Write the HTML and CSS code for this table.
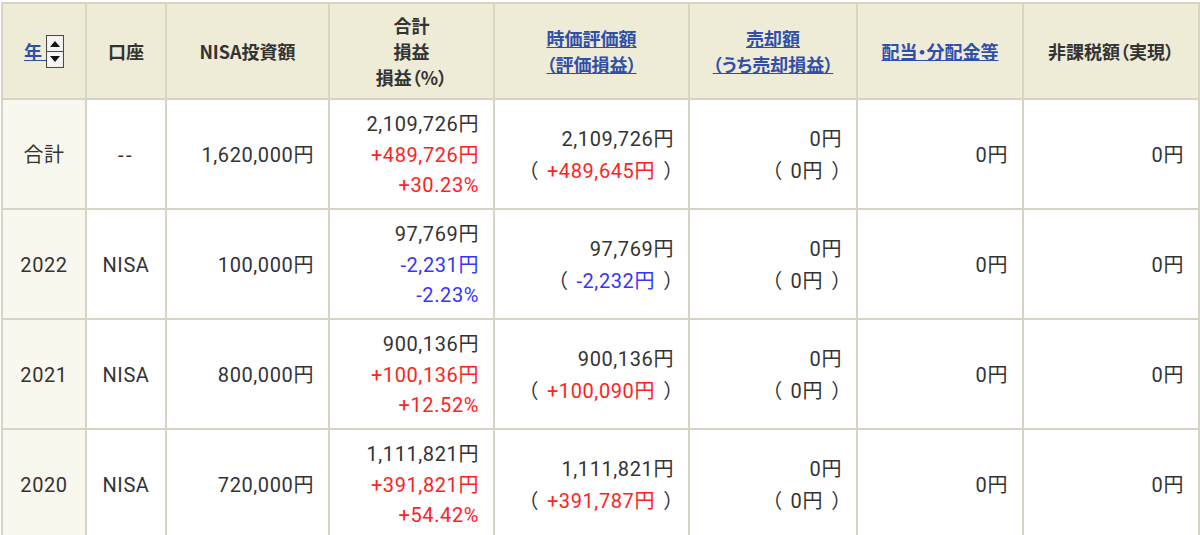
FILE: index.html
```html
<!DOCTYPE html>
<html lang="ja">
<head>
<meta charset="utf-8">
<title>NISA</title>
<link rel="stylesheet" href="styles.css">
</head>
<body>
<table class="tbl">
  <colgroup>
    <col class="c1"><col class="c2"><col class="c3"><col class="c4"><col class="c5"><col class="c6"><col class="c7"><col class="c8">
  </colgroup>
  <thead>
    <tr class="hrow">
      <th><span class="year"><a href="#" class="lnk">年&nbsp;</a><svg class="sort" width="18" height="33" viewBox="0 0 18 33"><rect x="0.5" y="0.5" width="17" height="32" fill="#e8e8e8" stroke="#4a4a4a"/><rect x="1.5" y="1.5" width="15" height="14" fill="#f4f4f4"/><rect x="1.5" y="17.5" width="15" height="14" fill="#f4f4f4"/><line x1="0" y1="16.5" x2="18" y2="16.5" stroke="#4a4a4a"/><polygon points="4,12 14,12 9,6" fill="#111"/><polygon points="4,21 14,21 9,27" fill="#111"/></svg></span></th>
      <th>口座</th>
      <th>NISA投資額</th>
      <th>合計<br>損益<br>損益（%）</th>
      <th><a href="#" class="lnk">時価評価額<br>（評価損益）</a></th>
      <th><a href="#" class="lnk">売却額<br>（うち売却損益）</a></th>
      <th><a href="#" class="lnk">配当・分配金等</a></th>
      <th>非課税額（実現）</th>
    </tr>
  </thead>
  <tbody>
    <tr class="brow">
      <td class="yr">合計</td>
      <td class="ctr"><span class="dash">--</span></td>
      <td class="num">1,620,000円</td>
      <td class="num">2,109,726円<br><span class="pos">+489,726円</span><br><span class="pos">+30.23%</span></td>
      <td class="num">2,109,726円<br><span class="po">（</span><span class="pos">+489,645円</span><span class="pc">）</span></td>
      <td class="num">0円<br><span class="po">（</span>0円<span class="pc">）</span></td>
      <td class="num">0円</td>
      <td class="num">0円</td>
    </tr>
    <tr class="brow">
      <td class="yr">2022</td>
      <td class="ctr">NISA</td>
      <td class="num">100,000円</td>
      <td class="num">97,769円<br><span class="neg">-2,231円</span><br><span class="neg">-2.23%</span></td>
      <td class="num">97,769円<br><span class="po">（</span><span class="neg">-2,232円</span><span class="pc">）</span></td>
      <td class="num">0円<br><span class="po">（</span>0円<span class="pc">）</span></td>
      <td class="num">0円</td>
      <td class="num">0円</td>
    </tr>
    <tr class="brow">
      <td class="yr">2021</td>
      <td class="ctr">NISA</td>
      <td class="num">800,000円</td>
      <td class="num">900,136円<br><span class="pos">+100,136円</span><br><span class="pos">+12.52%</span></td>
      <td class="num">900,136円<br><span class="po">（</span><span class="pos">+100,090円</span><span class="pc">）</span></td>
      <td class="num">0円<br><span class="po">（</span>0円<span class="pc">）</span></td>
      <td class="num">0円</td>
      <td class="num">0円</td>
    </tr>
    <tr class="brow">
      <td class="yr">2020</td>
      <td class="ctr">NISA</td>
      <td class="num">720,000円</td>
      <td class="num">1,111,821円<br><span class="pos">+391,821円</span><br><span class="pos">+54.42%</span></td>
      <td class="num">1,111,821円<br><span class="po">（</span><span class="pos">+391,787円</span><span class="pc">）</span></td>
      <td class="num">0円<br><span class="po">（</span>0円<span class="pc">）</span></td>
      <td class="num">0円</td>
      <td class="num">0円</td>
    </tr>
  </tbody>
</table>
</body>
</html>
```

FILE: styles.css
```css
html, body {
  margin: 0;
  padding: 0;
  background: #ffffff;
}
body {
  font-family: Roboto, "Noto Sans CJK JP", sans-serif;
  color: #333333;
  overflow: hidden;
}
.tbl {
  border-collapse: collapse;
  table-layout: fixed;
  width: 1198px;
  margin: 2px 0 0 1px;
}
.c1 { width: 84px; }
.c2 { width: 80px; }
.c3 { width: 163px; }
.c4 { width: 165px; }
.c5 { width: 195px; }
.c6 { width: 168px; }
.c7 { width: 166px; }
.c8 { width: 176px; }
.tbl th, .tbl td {
  border: 2px solid #d7d4c6;
  padding: 0;
  vertical-align: middle;
}
.tbl th {
  background: #eeebd6;
  font-family: "Noto Sans CJK JP", sans-serif;
  font-feature-settings: "palt";
  font-weight: bold;
  font-size: 18px;
  line-height: 26px;
  text-align: center;
  color: #333333;
}
.hrow { height: 96px; }
.brow { height: 110px; }
.tbl td {
  font-size: 20px;
  line-height: 30.5px;
  letter-spacing: 0.6px;
  padding-top: 2px;
}
.yr {
  background: #f8f8ee;
  text-align: center;
}
.ctr { text-align: center; }
.dash { letter-spacing: 2.5px; }
.num {
  text-align: right;
  padding-right: 14px !important;
}
.lnk {
  color: #2f4fa8;
  text-decoration: underline;
}
.year {
  display: inline-flex;
  align-items: center;
}
.sort {
  display: block;
}
.pos { color: #ff2222; }
.neg { color: #3535ff; }
.po, .pc {
  font-family: "Noto Sans CJK JP", sans-serif;
  font-feature-settings: "palt";
  letter-spacing: 0;
}
.po { padding-right: 9px; }
.pc { padding-left: 9px; }
```
